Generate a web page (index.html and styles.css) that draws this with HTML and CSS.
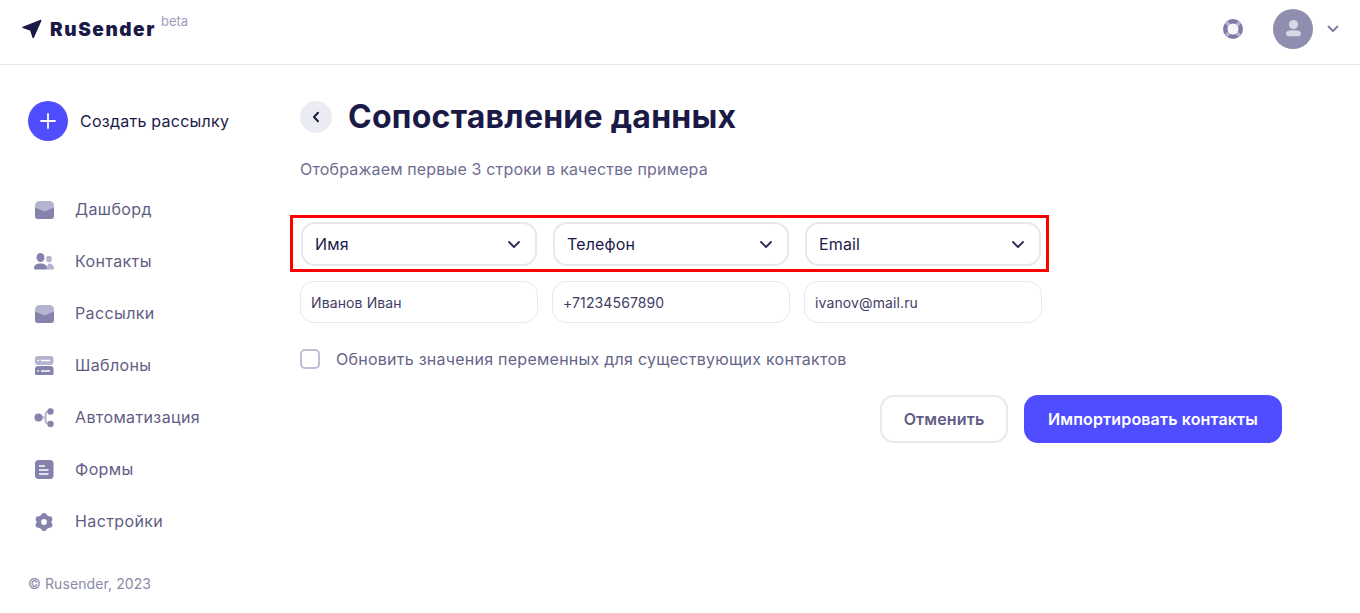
FILE: index.html
```html
<!DOCTYPE html>
<html lang="ru">
<head>
<meta charset="utf-8">
<title>RuSender</title>
<link rel="stylesheet" href="styles.css">
</head>
<body>
<header class="topbar">
  <div class="brand">
    <svg class="brand-icon" width="20" height="20" viewBox="0 0 20 20"><path d="M18.800 1.400 11.200 18.600 8.800 11.200 1 8.400Z" fill="#1b1a47" stroke="#1b1a47" stroke-width="1.400" stroke-linejoin="round"/></svg>
    <span class="brand-name">RuSender</span>
    <span class="brand-tag">beta</span>
  </div>
  <div class="top-actions">
    <svg class="help" width="20" height="20" viewBox="0 0 20 20"><circle cx="10" cy="10" r="10" fill="#7c7aa8"/><path d="M3 3l14 14M17 3 3 17" stroke="#b4b3cf" stroke-width="3.500"/><circle cx="10" cy="10" r="5.500" fill="#f6f6fa"/></svg>
    <div class="avatar"><svg width="40" height="40" viewBox="0 0 40 40"><circle cx="20.500" cy="15.500" r="4.600" fill="#d6d6e4"/><path d="M13 24.500c0-2 2-3.200 7.500-3.200s7.500 1.200 7.500 3.200c0 2-1.500 2.800-3 2.800h-9c-1.500 0-3-.8-3-2.800Z" fill="#d6d6e4"/></svg></div>
    <svg class="caret" width="12" height="8" viewBox="0 0 12 8"><path d="M1.500 1.500 6 6l4.500-4.500" fill="none" stroke="#7c7aa8" stroke-width="1.800" stroke-linecap="round" stroke-linejoin="round"/></svg>
  </div>
</header>
<div class="layout">
  <aside class="sidebar">
    <a class="create">
      <span class="create-btn"><svg width="18" height="18" viewBox="0 0 18 18"><path d="M9 2v14M2 9h14" stroke="#fff" stroke-width="1.800" stroke-linecap="round"/></svg></span>
      <span>Создать рассылку</span>
    </a>
    <nav class="nav">
      <a class="nav-item">
        <svg width="20" height="20" viewBox="0 0 20 20"><path d="M1 9V6.500A4.500 4.500 0 0 1 5.500 2h10A4.500 4.500 0 0 1 20 6.500V9l-9.500 5Z" fill="#b5b4d0"/><path d="M1 8.500l9.500 4L20 8.500V17a3 3 0 0 1-3 3H4a3 3 0 0 1-3-3Z" fill="#8583ad"/></svg>
        <span>Дашборд</span>
      </a>
      <a class="nav-item">
        <svg width="20" height="20" viewBox="0 0 20 20"><ellipse cx="15" cy="8" rx="2.800" ry="3.300" fill="#b5b4d0"/><path d="M13 18.500c0-3.500.5-6 2.500-6s4.500 2 4.500 5c0 .7-.3 1-1 1Z" fill="#b5b4d0"/><ellipse cx="6.500" cy="6.500" rx="4" ry="4.600" fill="#8583ad"/><path d="M0 17c0-3 2.500-4.500 6.500-4.500s6.500 1.500 6.500 4.500c0 1-.5 1.500-1.500 1.500h-10C.5 18.500 0 18 0 17Z" fill="#8583ad"/></svg>
        <span>Контакты</span>
      </a>
      <a class="nav-item">
        <svg width="20" height="20" viewBox="0 0 20 20"><path d="M1 9V6.500A4.500 4.500 0 0 1 5.500 2h10A4.500 4.500 0 0 1 20 6.500V9l-9.500 5Z" fill="#b5b4d0"/><path d="M1 8.500l9.500 4L20 8.500V17a3 3 0 0 1-3 3H4a3 3 0 0 1-3-3Z" fill="#8583ad"/></svg>
        <span>Рассылки</span>
      </a>
      <a class="nav-item">
        <svg width="20" height="20" viewBox="0 0 20 20"><rect x="1" y="1" width="18.500" height="9" rx="3" fill="#b5b4d0"/><rect x="1" y="11" width="18.500" height="10" rx="3" fill="#8583ad"/><path d="M3.500 5.500h1.500M7 5.500h9M3.500 16h1.500M7 16h9" stroke="#fff" stroke-width="1.400"/></svg>
        <span>Шаблоны</span>
      </a>
      <a class="nav-item">
        <svg width="20" height="20" viewBox="0 0 20 20"><path d="M15 4.500c-3.500 0-3.500 2-3.500 6s0 6.500 3.500 6.500" fill="none" stroke="#b5b4d0" stroke-width="2"/><path d="M6 10.500h5" stroke="#b5b4d0" stroke-width="2"/><circle cx="4.500" cy="10.500" r="4" fill="#8583ad"/><circle cx="16.500" cy="4.500" r="3.200" fill="#8583ad"/><circle cx="16.500" cy="17" r="3.200" fill="#8583ad"/></svg>
        <span>Автоматизация</span>
      </a>
      <a class="nav-item">
        <svg width="20" height="20" viewBox="0 0 20 20"><rect x="1" y="1" width="18.500" height="19" rx="3.500" fill="#8583ad"/><path d="M5 7h6M5 11h9.500M5 15h9.500" stroke="#fff" stroke-width="1.500"/></svg>
        <span>Формы</span>
      </a>
      <a class="nav-item">
        <svg width="20" height="20" viewBox="0 0 20 20"><g fill="#8583ad"><circle cx="10" cy="11" r="7.500"/><circle cx="10" cy="4.800" r="2.800"/><circle cx="10" cy="17.200" r="2.800"/><circle cx="4.400" cy="8" r="2.800"/><circle cx="15.600" cy="8" r="2.800"/><circle cx="4.400" cy="14" r="2.800"/><circle cx="15.600" cy="14" r="2.800"/></g><circle cx="10" cy="11" r="2.900" fill="#fff"/></svg>
        <span>Настройки</span>
      </a>
    </nav>
    <footer class="copyright">© Rusender, 2023</footer>
  </aside>
  <main class="content">
    <div class="heading">
      <button class="back"><svg width="10" height="12" viewBox="0 0 10 12"><path d="M7 1.800 3 6l4 4.200" fill="none" stroke="#1b1a47" stroke-width="2" stroke-linecap="round" stroke-linejoin="round"/></svg></button>
      <h1>Сопоставление данных</h1>
    </div>
    <p class="subtitle">Отображаем первые 3 строки в качестве примера</p>
    <div class="mapping">
      <div class="select"><span>Имя</span><svg width="14" height="9" viewBox="0 0 14 9"><path d="M2 2l5 5 5-5" fill="none" stroke="#2c2b55" stroke-width="1.800" stroke-linecap="round" stroke-linejoin="round"/></svg></div>
      <div class="select"><span>Телефон</span><svg width="14" height="9" viewBox="0 0 14 9"><path d="M2 2l5 5 5-5" fill="none" stroke="#2c2b55" stroke-width="1.800" stroke-linecap="round" stroke-linejoin="round"/></svg></div>
      <div class="select"><span>Email</span><svg width="14" height="9" viewBox="0 0 14 9"><path d="M2 2l5 5 5-5" fill="none" stroke="#2c2b55" stroke-width="1.800" stroke-linecap="round" stroke-linejoin="round"/></svg></div>
    </div>
    <div class="samples">
      <div class="sample">Иванов Иван</div>
      <div class="sample">+71234567890</div>
      <div class="sample">ivanov@mail.ru</div>
    </div>
    <label class="check"><span class="box"></span><span>Обновить значения переменных для существующих контактов</span></label>
    <div class="actions">
      <button class="btn btn-ghost">Отменить</button>
      <button class="btn btn-primary">Импортировать контакты</button>
    </div>
  </main>
</div>
</body>
</html>
```
FILE: styles.css
```css
* { box-sizing: border-box; }
html, body { margin: 0; height: 100%; overflow: hidden; }
body { background: #fff; font-family: Inter, "Liberation Sans", sans-serif; color: #1b1a47; }

.topbar { height: 65px; border-bottom: 1px solid #e7e7f0; display: flex; align-items: center; justify-content: space-between; padding: 0 21px 6px 22px; }
.brand { display: flex; align-items: center; position: relative; }
.brand-icon { margin-right: 8px; }
.brand-name { font-family: Inter, sans-serif; font-weight: 900; font-size: 19px; letter-spacing: 1.550px; color: #1b1a47; }
.brand-tag { font-size: 13px; color: #9e9dbd; margin-left: 5px; position: relative; top: -8px; }
.top-actions { display: flex; align-items: center; }
.help { margin-right: 30px; }
.avatar { width: 40px; height: 40px; border-radius: 50%; background: #8f8eae; margin-right: 14px; }
.avatar svg { display: block; }
.caret { display: block; }

.layout { display: flex; height: 548px; }
.sidebar { width: 300px; flex: none; padding: 36px 0 0 28px; display: flex; flex-direction: column; }
.create { display: flex; align-items: center; gap: 12px; font-size: 16px; letter-spacing: .25px; color: #1b1a47; height: 40px; }
.create-btn { width: 40px; height: 40px; border-radius: 50%; background: #4f4dff; display: flex; align-items: center; justify-content: center; }
.nav { margin: 42px 0 0 6px; display: flex; flex-direction: column; }
.nav-item { height: 52px; display: flex; align-items: center; gap: 21px; font-size: 16px; letter-spacing: .38px; color: #5f5d84; }
.copyright { margin-top: 28px; font-size: 14px; letter-spacing: .1px; color: #8b8aa8; line-height: 17px; }

.content { width: 982px; padding-top: 36px; }
.heading { display: flex; align-items: center; gap: 16px; height: 32px; }
.back { width: 32px; height: 32px; border: 0; padding: 0; border-radius: 50%; background: #ebebf3; display: flex; align-items: center; justify-content: center; }
h1 { margin: 0; font-size: 32px; line-height: 32px; font-weight: 700; letter-spacing: .25px; color: #1b1a47; }
.subtitle { margin: 24px 0 0; font-size: 16px; line-height: 24px; letter-spacing: .16px; color: #6f6d92; }
.mapping { margin: 34px 0 0 -10px; width: 759px; height: 57px; border: 3px solid #f00; padding: 4px 5px 4px 8px; display: flex; gap: 16px; }
.select { flex: none; width: 236px; height: 44px; border: 2px solid #e8e8ec; border-radius: 14px; padding: 0 14px 0 12px; display: flex; align-items: center; justify-content: space-between; font-size: 16px; letter-spacing: .15px; color: #1b1a47; }
.samples { margin-top: 9px; display: flex; gap: 14px; }
.sample { width: 238px; height: 42px; border: 1px solid #e8e8f0; border-radius: 14px; padding: 0 10px; display: flex; align-items: center; font-size: 14px; letter-spacing: .12px; color: #3f3d66; }
.check { margin-top: 26px; display: flex; align-items: center; gap: 16px; font-size: 16px; line-height: 20px; letter-spacing: .25px; color: #66648a; }
.box { width: 20px; height: 20px; border: 2px solid #bfbed6; border-radius: 5px; }
.actions { margin-top: 26px; display: flex; justify-content: flex-end; gap: 16px; }
.btn { height: 48px; border-radius: 14px; font: 600 16px Inter, sans-serif; letter-spacing: .15px; }
.btn-ghost { width: 128px; background: #fff; border: 2px solid #e8e8f0; color: #5f5d84; }
.btn-primary { width: 258px; background: #4f4dff; border: 0; color: #fff; }
```
